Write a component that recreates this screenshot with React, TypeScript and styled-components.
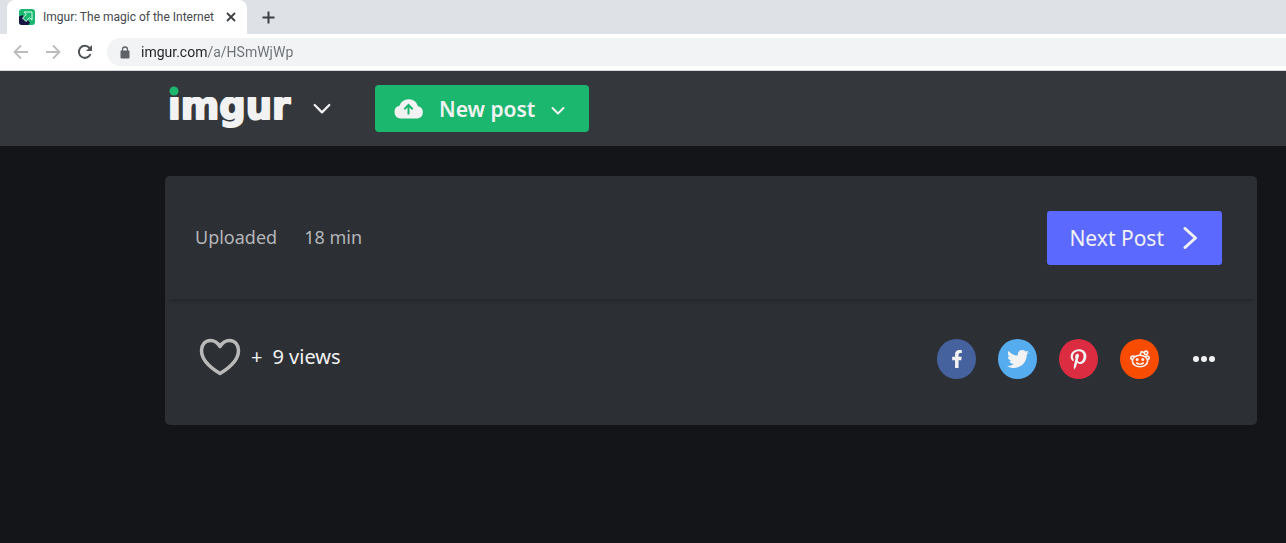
import React from 'react';
import styled, { createGlobalStyle } from 'styled-components';
import { FaFacebookF, FaTwitter, FaPinterestP } from 'react-icons/fa';

const GlobalStyle = createGlobalStyle`
  * { box-sizing: border-box; }
  body {
    margin: 0;
    background: #141518;
    font-family: "Noto Sans", "Open Sans", sans-serif;
  }
  button { font-family: inherit; border: 0; padding: 0; background: none; cursor: pointer; }
  svg { display: block; flex: none; }
`;

const TabStrip = styled.div`
  display: flex;
  align-items: center;
  height: 34px;
  padding-left: 7px;
  background: #dee1e6;
`;

const Tab = styled.div`
  display: flex;
  align-items: center;
  align-self: stretch;
  width: 240px;
  padding: 0 11px 0 12px;
  border-radius: 8px 8px 0 0;
  background: #fff;
`;

const TabTitle = styled.span`
  flex: 1;
  margin-left: 8px;
  font-family: Roboto, sans-serif;
  font-size: 12px;
  line-height: 16px;
  white-space: nowrap;
  color: #45494d;
`;

const ChromeButton = styled.button<{ $tone?: string }>`
  display: flex;
  color: ${(p) => p.$tone ?? '#3c4043'};
`;

const NewTab = styled(ChromeButton)`
  margin-left: 15px;
`;

const Toolbar = styled.div`
  display: flex;
  align-items: center;
  gap: 16px;
  height: 37px;
  padding-left: 13px;
  border-bottom: 1px solid #d4d6d9;
  background: #fff;
`;

const AddressBar = styled.div`
  display: flex;
  align-items: center;
  flex: 1;
  gap: 11px;
  height: 28px;
  margin-left: -2px;
  padding-left: 13px;
  border-radius: 14px 0 0 14px;
  background: #f1f3f4;
`;

/* The host is dark and the path after it grey. */
const AddressInput = styled.input`
  flex: 1;
  height: 20px;
  padding: 0;
  border: 0;
  outline: 0;
  background: linear-gradient(90deg, #202124 67px, #6b6f73 67px);
  background-clip: text;
  font-family: Roboto, sans-serif;
  font-size: 14px;
  line-height: 20px;
  color: transparent;
`;

const Header = styled.header`
  display: flex;
  align-items: center;
  height: 75px;
  padding-left: 165px;
  background: #34373c;
`;

const LogoLink = styled.a`
  display: block;
`;

const MenuButton = styled.button`
  display: flex;
  margin: 0 44px 0 16px;
  color: #f2f2f2;
`;

const NewPostButton = styled.button`
  display: flex;
  align-items: center;
  height: 47px;
  padding: 0 24px 0 19px;
  border-radius: 4px;
  background: #1bb76e;
  color: #f2f2f2;
  font-size: 21px;
  font-weight: 600;
  line-height: 28px;
`;

const NewPostLabel = styled.span`
  margin: 0 16px 0 15px;
`;

const Main = styled.main`
  padding: 30px 29px 118px 165px;
`;

const Card = styled.section`
  border-radius: 5px;
  background: #2c2f34;
`;

const UploadRow = styled.div`
  display: flex;
  align-items: center;
  gap: 27px;
  height: 123px;
  padding: 0 35px 0 30px;
  border-radius: 5px;
  box-shadow: 0 6px 5px -4px rgba(0, 0, 0, 0.24);
  color: #b4b5b8;
  font-size: 18px;
  line-height: 24px;
`;

const UploadText = styled.span`
  padding-bottom: 2px;
`;

const NextButton = styled.button`
  display: flex;
  align-items: center;
  gap: 19px;
  height: 54px;
  margin-left: auto;
  padding: 0 23px 0 22px;
  border-radius: 3px;
  background: #5c69ff;
  color: #f2f2f2;
  font-size: 21px;
  line-height: 28px;
`;

const ActionRow = styled.div`
  display: flex;
  align-items: center;
  height: 126px;
  padding: 0 42px 6px 34px;
  color: #f2f2f2;
  font-size: 20px;
  line-height: 28px;
`;

const Stats = styled.div`
  display: flex;
  align-items: center;
  padding-bottom: 4px;
`;

const HeartButton = styled.button`
  display: flex;
  margin-right: 10px;
`;

const Views = styled.span`
  margin-left: 10px;
`;

const ShareList = styled.div`
  display: flex;
  align-items: center;
  gap: 22px;
  margin-left: auto;
`;

const ShareButton = styled.button<{ $color: string }>`
  display: flex;
  align-items: center;
  justify-content: center;
  width: 39px;
  height: 40px;
  border-radius: 50%;
  background: ${(p) => p.$color};
  color: #f2f2f2;
`;

const MoreButton = styled.button`
  display: flex;
  margin-left: 12px;
`;

const Favicon = () => (
  <svg width="16" height="16" viewBox="0 0 16 16" aria-hidden="true">
    <rect width="16" height="16" rx="3" fill="#1bb76e" />
    <path d="M0 7.500V13a3 3 0 0 0 3 3h6.500l1.500-2.500L3.500 6z" fill="#171544" />
    <path d="M5 3h8v8l-2.500-2.300L7 12.500 3.500 9 7.300 5.500z" fill="#1bb76e" stroke="#d8fff0" strokeWidth="1" />
  </svg>
);

const Logo = () => (
  <svg width="132" height="61" viewBox="0 0 132 61" role="img" aria-label="imgur">
    <clipPath id="belowDot"><rect x="0" y="19" width="132" height="42" /></clipPath>
    <text x="3" y="41" clipPath="url(#belowDot)" fontFamily="DejaVu Sans" fontWeight="700" fontSize="37" fill="#f2f2f2" stroke="#f2f2f2" strokeWidth="2" strokeLinejoin="round">imgur</text>
    <circle cx="9" cy="13" r="4.500" fill="#1bb76e" />
  </svg>
);

const Chevron = ({ size }: { size: number }) => (
  <svg width={size} height={size} viewBox="0 0 16 16" fill="none" stroke="currentColor" strokeWidth="2" strokeLinecap="round" strokeLinejoin="round" aria-hidden="true">
    <path d="M1.500 4.500 8 11l6.500-6.500" />
  </svg>
);

const SmallChevron = () => (
  <svg width="14" height="14" viewBox="0 0 14 14" fill="none" stroke="currentColor" strokeWidth="2" strokeLinecap="round" strokeLinejoin="round" aria-hidden="true">
    <path d="M1.500 6 7 11.500 12.500 6" />
  </svg>
);

const Reddit = () => (
  <svg width="20" height="18" viewBox="0 0 20 18" fill="none" stroke="#f2f2f2" strokeWidth="1.600" aria-hidden="true">
    <ellipse cx="10" cy="11" rx="7.600" ry="5.700" />
    <path d="M3 9.800C.2 9.600 0 6 3 6c1 0 1.700.4 2 1M17 9.800c2.800-.2 3-3.800 0-3.800-1 0-1.700.4-2 1M10 5.300l1.300-3.500 3 .8" />
    <circle cx="16" cy="2.800" r="1.700" />
    <circle cx="7.200" cy="9.500" r="1.500" fill="#f2f2f2" stroke="none" />
    <circle cx="12.800" cy="9.500" r="1.500" fill="#f2f2f2" stroke="none" />
    <path d="M6.700 13c1.800 1.400 4.800 1.400 6.600 0" strokeLinecap="round" />
  </svg>
);

export default function App() {
  return (
    <>
      <GlobalStyle />
      <TabStrip>
        <Tab>
          <Favicon />
          <TabTitle>Imgur: The magic of the Internet</TabTitle>
          <ChromeButton aria-label="Close tab">
            <svg width="10" height="10" viewBox="0 0 10 10" stroke="currentColor" strokeWidth="1.800"><path d="M1 1l8 8M9 1 1 9" /></svg>
          </ChromeButton>
        </Tab>
        <NewTab aria-label="New tab">
          <svg width="13" height="13" viewBox="0 0 13 13" stroke="currentColor" strokeWidth="2"><path d="M6.500 .5v12M.5 6.500h12" /></svg>
        </NewTab>
      </TabStrip>
      <Toolbar>
        <ChromeButton $tone="#babcbe" aria-label="Back">
          <svg width="16" height="16" viewBox="0 0 16 16" fill="none" stroke="currentColor" strokeWidth="1.800"><path d="M15 8H2M8 1.500 1.500 8 8 14.500" /></svg>
        </ChromeButton>
        <ChromeButton $tone="#babcbe" aria-label="Forward">
          <svg width="16" height="16" viewBox="0 0 16 16" fill="none" stroke="currentColor" strokeWidth="1.800"><path d="M1 8h13M8 1.500 14.500 8 8 14.500" /></svg>
        </ChromeButton>
        <ChromeButton $tone="#505357" aria-label="Reload">
          <svg width="16" height="16" viewBox="0 0 16 16" fill="none" stroke="currentColor" strokeWidth="2"><path d="M13.500 10A6 6 0 1 1 12.500 4" /><path d="M15 1v6H9z" fill="currentColor" stroke="none" /></svg>
        </ChromeButton>
        <AddressBar>
          <svg width="10" height="13" viewBox="0 0 10 13" aria-hidden="true">
            <rect x="0.500" y="4.500" width="9" height="8" rx="1" fill="#5f6368" />
            <path d="M2.500 5V3.500a2.500 2.500 0 0 1 5 0V5" fill="none" stroke="#5f6368" strokeWidth="1.300" />
          </svg>
          <AddressInput aria-label="Address" defaultValue="imgur.com/a/HSmWjWp" />
        </AddressBar>
      </Toolbar>
      <Header>
        <LogoLink href="#" aria-label="Imgur home"><Logo /></LogoLink>
        <MenuButton aria-label="Open menu"><Chevron size={18} /></MenuButton>
        <NewPostButton>
          <svg width="30" height="20" viewBox="0 0 30 20" aria-hidden="true">
            <path d="M6.500 19.500A6.500 6.500 0 0 1 5.500 6.700 9.700 9.700 0 0 1 24 7.300 6.200 6.200 0 0 1 23.500 19.500z" fill="#f2f2f2" />
            <path d="M14.500 15.500V6.500M10.300 10.200l4.200-4.200 4.200 4.200" fill="none" stroke="#1bb76e" strokeWidth="2" />
          </svg>
          <NewPostLabel>New post</NewPostLabel>
          <SmallChevron />
        </NewPostButton>
      </Header>
      <Main>
        <Card>
          <UploadRow>
            <UploadText>Uploaded</UploadText>
            <UploadText>18 min</UploadText>
            <NextButton>
              Next Post
              <svg width="16" height="22" viewBox="0 0 16 22" fill="none" stroke="currentColor" strokeWidth="3" strokeLinecap="round" strokeLinejoin="round"><path d="M2 1.500l10.500 9.500L2 20.500" /></svg>
            </NextButton>
          </UploadRow>
          <ActionRow>
            <Stats>
              <HeartButton aria-label="Favorite">
                <svg width="42" height="38" viewBox="0 0 42 38" fill="none" stroke="#b9b9ba" strokeWidth="3.500" strokeLinejoin="round">
                  <path d="M21 8.500C18.500 4.500 15 2.500 11.500 2.500 6 2.500 2.500 7 2.500 12.500c0 9 8.500 17 18.500 23 10-6 18.500-14 18.500-23C39.500 7 36 2.500 30.500 2.500c-3.500 0-7 2-9.500 6z" />
                </svg>
              </HeartButton>
              <span>+</span>
              <Views>9 views</Views>
            </Stats>
            <ShareList>
              <ShareButton $color="#46629e" aria-label="Share on Facebook"><FaFacebookF size={18} /></ShareButton>
              <ShareButton $color="#55acee" aria-label="Share on Twitter"><FaTwitter size={22} /></ShareButton>
              <ShareButton $color="#dc2c42" aria-label="Share on Pinterest"><FaPinterestP size={21} /></ShareButton>
              <ShareButton $color="#f94c03" aria-label="Share on Reddit"><Reddit /></ShareButton>
              <MoreButton aria-label="More options">
                <svg width="22" height="6" viewBox="0 0 22 6" fill="#f2f2f2"><circle cx="3" cy="3" r="3" /><circle cx="11" cy="3" r="3" /><circle cx="19" cy="3" r="3" /></svg>
              </MoreButton>
            </ShareList>
          </ActionRow>
        </Card>
      </Main>
    </>
  );
}
